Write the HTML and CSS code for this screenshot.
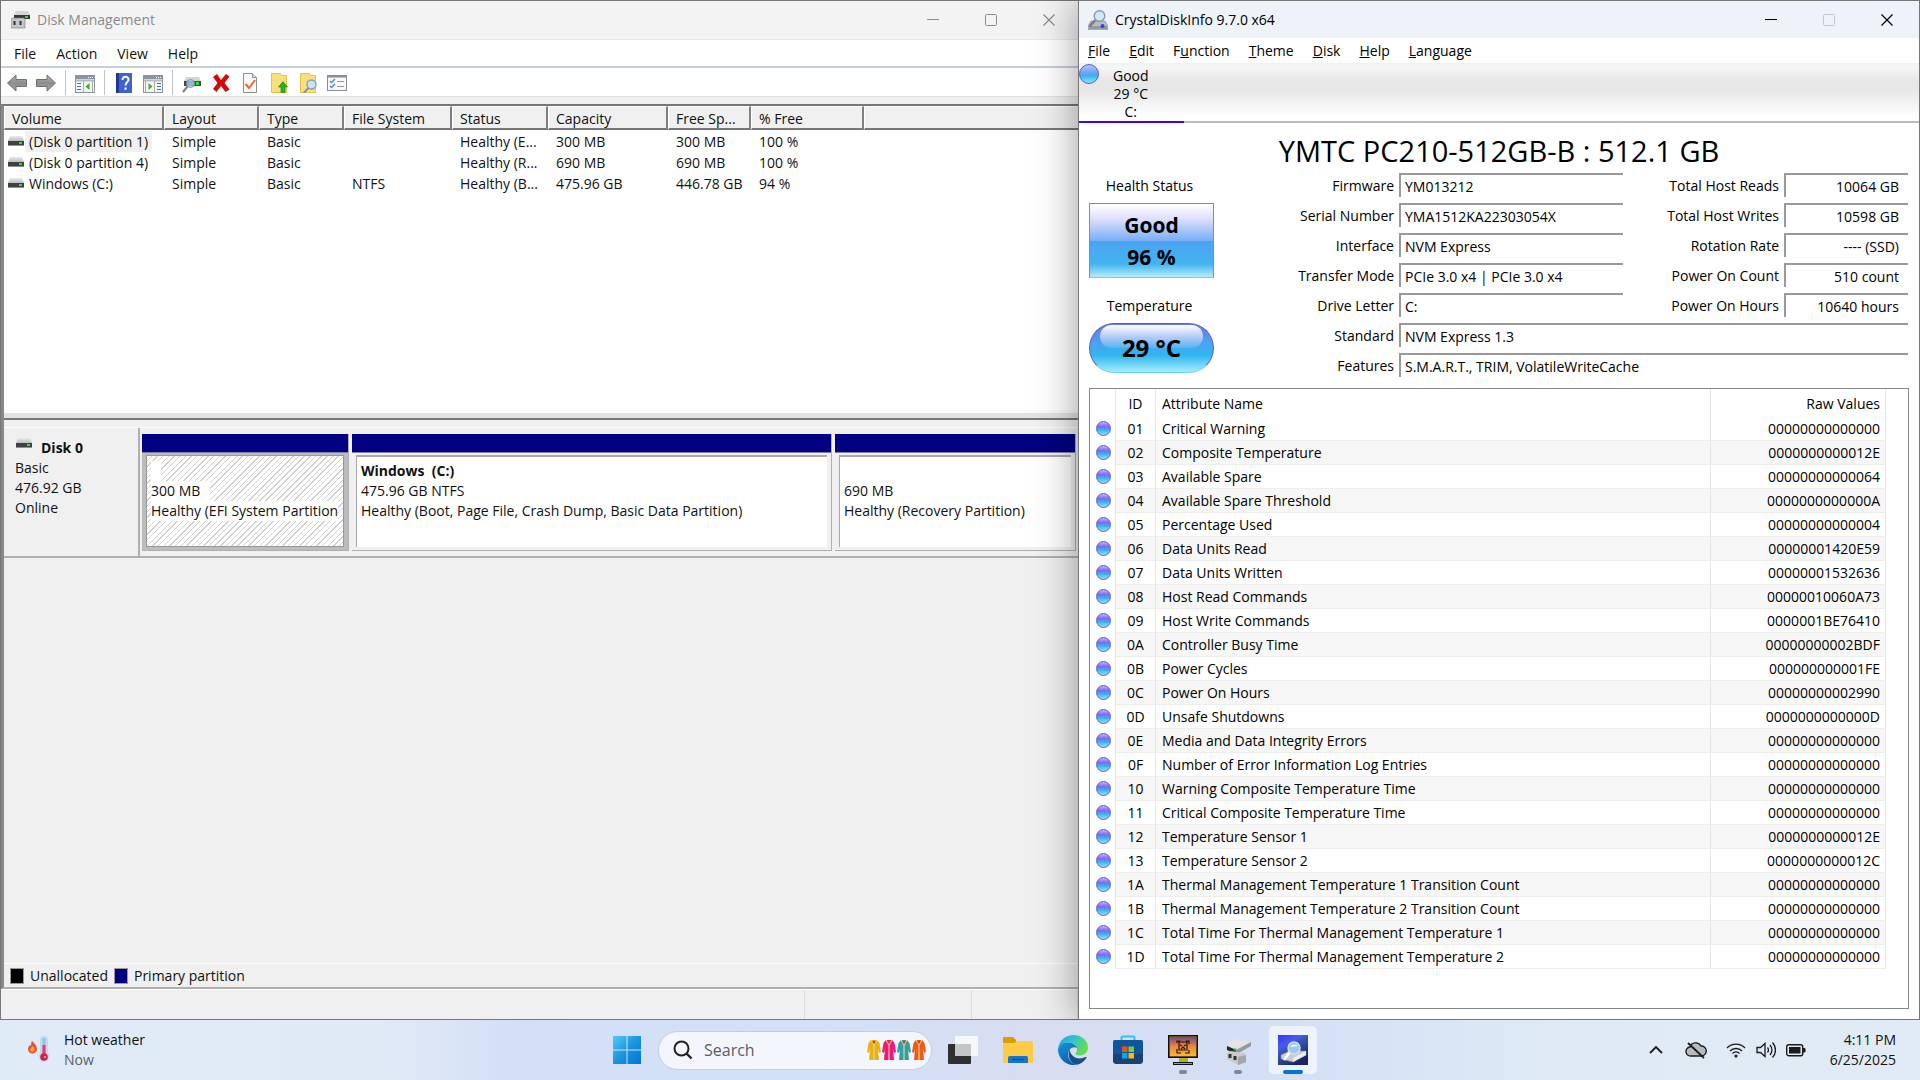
FILE: index.html
```html
<!DOCTYPE html>
<html lang="en">
  <head>
    <meta charset="UTF-8" />
    <meta name="viewport" content="width=device-width, initial-scale=1.0" />
    <title>Disk Management and CrystalDiskInfo</title>
    <link rel="stylesheet" href="styles.css">
  </head>
  <body>
    <!-- Shared symbols -->
    <svg class="defs" width="0" height="0" aria-hidden="true">
      <defs>
        <linearGradient id="driveTop" x1="0" y1="0" x2="0" y2="1">
          <stop offset="0" stop-color="#e9ebec" />
          <stop offset="1" stop-color="#b9bdc0" />
        </linearGradient>
        <linearGradient id="arrowFill" x1="0" y1="0" x2="0" y2="1">
          <stop offset="0" stop-color="#b5b5b5" />
          <stop offset="0.5" stop-color="#8d8d8d" />
          <stop offset="1" stop-color="#a5a5a5" />
        </linearGradient>
        <symbol id="drive" viewBox="0 0 18 12">
          <path d="M3 0h12l2 5H1z" fill="url(#driveTop)" />
          <rect x="1" y="5" width="16" height="4" fill="#3d4244" />
          <rect x="1" y="9" width="16" height="1" fill="#8b9194" />
          <rect x="12" y="6" width="3" height="2" fill="#2fe02f" />
        </symbol>
        <symbol id="minimize" viewBox="0 0 12 12">
          <path d="M0 5.5h12" stroke="currentColor" fill="none" />
        </symbol>
        <symbol id="maximize" viewBox="0 0 12 12">
          <rect x="0.5" y="0.5" width="11" height="11" rx="1" stroke="currentColor" fill="none" />
        </symbol>
        <symbol id="close" viewBox="0 0 12 12">
          <path d="M0.5 0.5l11 11M11.5 0.5l-11 11" stroke="currentColor" stroke-width="1.2" fill="none" />
        </symbol>
        <symbol id="panel" viewBox="0 0 20 18">
          <rect x="0.5" y="0.5" width="19" height="17" fill="#f4f4f4" stroke="#8c949c" />
          <rect x="1" y="1" width="18" height="3" fill="#8c949c" />
          <path d="M13 2.5h1M15 2.5h1M17 2.5h1" stroke="#fff" />
          <path d="M1 5.5h18" stroke="#b4bac0" stroke-width="2" />
        </symbol>
        <symbol id="robe" viewBox="0 0 14 22">
          <path d="M4 1h6l2.500 3 1.500 9-2 1-1-4 1 11H2l1-11-1 4-2-1 1.500-9z" fill="currentColor" />
          <path d="M4 1l3 5 3-5M7 6v15" stroke="#f4d277" stroke-width="1.2" fill="none" />
          <circle cx="7" cy="3" r="1.5" fill="#c9442a" />
        </symbol>
      </defs>
    </svg>

    <main class="desktop">
      <!-- Disk Management -->
      <section class="window disk-management">
        <header class="titlebar">
          <svg class="app-icon" viewBox="0 0 20 20">
            <path d="M5 1h12l2 4H3z" fill="#d3d5d6" />
            <rect x="3" y="5" width="16" height="4" fill="#35393b" />
            <rect x="14" y="6" width="3" height="2" fill="#2fe02f" />
            <path d="M0 9l2-1h11l1 1v9H0z" fill="#c4c6c9" stroke="#777" stroke-width="0.6" />
            <path d="M3.5 11v4M9.5 11v4" stroke="#333" stroke-width="2" />
          </svg>
          <span class="window-title">Disk Management</span>
          <button class="caption-button" aria-label="Minimize"><svg><use href="#minimize" /></svg></button>
          <button class="caption-button" aria-label="Maximize"><svg><use href="#maximize" /></svg></button>
          <button class="caption-button" aria-label="Close"><svg><use href="#close" /></svg></button>
        </header>

        <nav class="menubar">
          <button>File</button>
          <button>Action</button>
          <button>View</button>
          <button>Help</button>
        </nav>

        <div class="toolbar">
          <button aria-label="Back">
            <svg viewBox="0 0 20 20"><path d="M0.5 10L9 2v4.5h10.5v7H9V18z" fill="url(#arrowFill)" stroke="#6e6e6e" /></svg>
          </button>
          <button aria-label="Forward">
            <svg viewBox="0 0 20 20"><path d="M19.5 10L11 2v4.5H0.5v7H11V18z" fill="url(#arrowFill)" stroke="#6e6e6e" /></svg>
          </button>
          <span class="separator"></span>
          <button aria-label="Show console tree">
            <svg viewBox="0 0 20 20">
              <use href="#panel" y="2" width="20" height="18" />
              <path d="M2 10.5h4M2 13.5h4M2 16.5h4" stroke="#3b78b8" />
              <path d="M8.5 8v11M17.5 8v11" stroke="#aaa" />
              <path d="M14.5 10v7l-4-3.500z" fill="#3fae29" />
            </svg>
          </button>
          <span class="separator"></span>
          <button aria-label="Help">
            <svg viewBox="0 0 20 20">
              <rect x="2" y="0" width="16" height="20" fill="#3d63d2" />
              <rect x="2" y="0" width="3" height="20" fill="#20398f" />
              <path d="M8.5 7c0-4.500 6.500-4 6 0-0.300 2-3 2.500-3 5.500M11.5 14.5v2.200" stroke="#fff" stroke-width="2" fill="none" />
            </svg>
          </button>
          <button aria-label="Show action pane">
            <svg viewBox="0 0 20 20">
              <use href="#panel" y="2" width="20" height="18" />
              <path d="M14 10.5h4M14 13.5h4M14 16.5h4" stroke="#3b78b8" />
              <path d="M11.5 8v11M2.5 8v11" stroke="#aaa" />
              <path d="M5.5 10v7l4-3.500z" fill="#3fae29" />
            </svg>
          </button>
          <span class="separator"></span>
          <button aria-label="Rescan disks">
            <svg viewBox="0 0 20 20">
              <path d="M4 4h13l2 4H2z" fill="#d3d6d8" />
              <rect x="2" y="8" width="17" height="5" fill="#44494c" />
              <rect x="14" y="9" width="3" height="3" fill="#2fe02f" />
              <circle cx="8.5" cy="10.5" r="4" fill="#a9d2ee" fill-opacity="0.8" stroke="#7c99ad" />
              <path d="M5.5 13.5L1 19" stroke="#6d8294" stroke-width="2" />
            </svg>
          </button>
          <button aria-label="Delete">
            <svg viewBox="0 0 20 20"><path d="M2 4l4-3 4 6 5-6 3.500 2.500L13.500 10l5 6.500-4 2.500-4.500-6-4.500 6L2 16l4.500-6z" fill="#d4090c" /></svg>
          </button>
          <button aria-label="Properties">
            <svg viewBox="0 0 20 20">
              <path d="M3.5 0.5h9l4 4v15h-13z" fill="#f8f8f8" stroke="#8e8e8e" />
              <path d="M12.5 0.5v4h4" fill="#ddd" stroke="#8e8e8e" />
              <path d="M5.5 11l3.500 4 6-8" stroke="#f0662c" stroke-width="2" fill="none" />
            </svg>
          </button>
          <button aria-label="Attach VHD">
            <svg viewBox="0 0 20 20">
              <path d="M2.5 0.5h9l1 2h5v17h-15z" fill="#fadf7c" stroke="#e6bf4e" />
              <path d="M14 8.5l4.500 5.500H16v5.500h-4V14H9.500z" fill="#25b225" stroke="#158215" stroke-width="0.6" />
            </svg>
          </button>
          <button aria-label="Explore">
            <svg viewBox="0 0 20 20">
              <path d="M2.5 0.5h9l1 2h5v17h-15z" fill="#fadf7c" stroke="#e6bf4e" />
              <circle cx="13.5" cy="11.5" r="4.5" fill="#c9e4f5" stroke="#7ba3c0" stroke-width="1.4" />
              <path d="M10.5 15L6 19.5" stroke="#8a9099" stroke-width="2" />
            </svg>
          </button>
          <button aria-label="View list">
            <svg viewBox="0 0 20 20">
              <rect x="0.5" y="2.5" width="19" height="15" fill="#f8f8f8" stroke="#888e94" />
              <path d="M0 3.5h20" stroke="#888e94" stroke-width="2" />
              <path d="M3 8l1.500 1.500L8 6M3 13l1.500 1.500L8 11" stroke="#3d8fdb" stroke-width="1.4" fill="none" />
              <path d="M10 8.5h7M10 13.5h7" stroke="#999" />
            </svg>
          </button>
        </div>

        <div class="frame">
          <div class="volume-list">
            <table class="volumes">
              <colgroup>
                <col class="c-volume"><col class="c-layout"><col class="c-type"><col class="c-fs">
                <col class="c-status"><col class="c-capacity"><col class="c-space"><col class="c-free"><col>
              </colgroup>
              <thead>
                <tr>
                  <th>Volume</th><th>Layout</th><th>Type</th><th>File System</th><th>Status</th>
                  <th>Capacity</th><th>Free Sp...</th><th>% Free</th><th></th>
                </tr>
              </thead>
              <tbody>
                <tr>
                  <td><svg class="drive"><use href="#drive" /></svg><span class="selected">(Disk 0 partition 1)</span></td>
                  <td>Simple</td><td>Basic</td><td></td><td>Healthy (E...</td>
                  <td>300 MB</td><td>300 MB</td><td>100 %</td><td></td>
                </tr>
                <tr>
                  <td><svg class="drive"><use href="#drive" /></svg><span>(Disk 0 partition 4)</span></td>
                  <td>Simple</td><td>Basic</td><td></td><td>Healthy (R...</td>
                  <td>690 MB</td><td>690 MB</td><td>100 %</td><td></td>
                </tr>
                <tr>
                  <td><svg class="drive"><use href="#drive" /></svg><span>Windows (C:)</span></td>
                  <td>Simple</td><td>Basic</td><td>NTFS</td><td>Healthy (B...</td>
                  <td>475.96 GB</td><td>446.78 GB</td><td>94 %</td><td></td>
                </tr>
              </tbody>
            </table>
          </div>

          <div class="splitter"></div>

          <div class="graphical-view">
            <div class="disk-row">
              <div class="disk-label">
                <h2><svg class="drive"><use href="#drive" /></svg>Disk 0</h2>
                <p>Basic</p>
                <p>476.92 GB</p>
                <p>Online</p>
              </div>
              <div class="partitions">
                <div class="partition current">
                  <div class="partition-bar"></div>
                  <div class="partition-body">
                    <p><span class="blank"></span></p>
                    <p><span class="size">300 MB</span></p>
                    <p><span>Healthy (EFI System Partition</span></p>
                  </div>
                </div>
                <div class="partition">
                  <div class="partition-bar"></div>
                  <div class="partition-body">
                    <p><strong>Windows&nbsp; (C:)</strong></p>
                    <p>475.96 GB NTFS</p>
                    <p>Healthy (Boot, Page File, Crash Dump, Basic Data Partition)</p>
                  </div>
                </div>
                <div class="partition">
                  <div class="partition-bar"></div>
                  <div class="partition-body">
                    <p></p>
                    <p>690 MB</p>
                    <p>Healthy (Recovery Partition)</p>
                  </div>
                </div>
              </div>
            </div>
          </div>

          <div class="legend">
            <span class="swatch unallocated"></span><span>Unallocated</span>
            <span class="swatch primary"></span><span>Primary partition</span>
          </div>
        </div>

        <footer class="statusbar"><span></span><span></span><span></span></footer>
      </section>

      <!-- CrystalDiskInfo -->
      <section class="window crystal">
        <header class="titlebar">
          <svg class="app-icon" viewBox="0 0 20 20">
            <path d="M3 11h14l3 5v4H0v-4z" fill="#b9bcc2" stroke="#83868c" stroke-width="0.6" />
            <rect x="1" y="16" width="18" height="3" fill="#95989e" />
            <path d="M7.5 10L1.5 16.5" stroke="#777b82" stroke-width="2.5" />
            <circle cx="11.5" cy="6" r="5.3" fill="#cfe8fa" stroke="#8f9aa6" stroke-width="1.4" />
            <circle cx="14.5" cy="16" r="2" fill="#3a3af0" />
          </svg>
          <span class="window-title">CrystalDiskInfo 9.7.0 x64</span>
          <button class="caption-button" aria-label="Minimize"><svg><use href="#minimize" /></svg></button>
          <button class="caption-button" aria-label="Maximize" disabled><svg><use href="#maximize" /></svg></button>
          <button class="caption-button" aria-label="Close"><svg><use href="#close" /></svg></button>
        </header>

        <nav class="menubar">
          <button><u>F</u>ile</button>
          <button><u>E</u>dit</button>
          <button>F<u>u</u>nction</button>
          <button><u>T</u>heme</button>
          <button><u>D</u>isk</button>
          <button><u>H</u>elp</button>
          <button><u>L</u>anguage</button>
        </nav>

        <div class="drive-tabs">
          <button class="drive-tab">
            <span class="ball large"></span>
            <span>Good<br>29 °C<br>C:</span>
          </button>
        </div>

        <h1>YMTC PC210-512GB-B : 512.1 GB</h1>

        <div class="summary">
          <div class="status-column">
            <span class="caption">Health Status</span>
            <button class="health"><span>Good</span><span>96 %</span></button>
            <span class="caption">Temperature</span>
            <button class="temperature"><span>29 °C</span></button>
          </div>
          <div class="details">
            <label for="firmware">Firmware</label><input id="firmware" value="YM013212" readonly />
            <label for="reads">Total Host Reads</label><input id="reads" class="number" value="10064 GB" readonly />
            <label for="serial">Serial Number</label><input id="serial" value="YMA1512KA22303054X" readonly />
            <label for="writes">Total Host Writes</label><input id="writes" class="number" value="10598 GB" readonly />
            <label for="interface">Interface</label><input id="interface" value="NVM Express" readonly />
            <label for="rotation">Rotation Rate</label><input id="rotation" class="number" value="---- (SSD)" readonly />
            <label for="transfer">Transfer Mode</label><input id="transfer" value="PCIe 3.0 x4 | PCIe 3.0 x4" readonly />
            <label for="count">Power On Count</label><input id="count" class="number" value="510 count" readonly />
            <label for="letter">Drive Letter</label><input id="letter" value="C:" readonly />
            <label for="hours">Power On Hours</label><input id="hours" class="number" value="10640 hours" readonly />
            <label for="standard">Standard</label><input id="standard" class="wide" value="NVM Express 1.3" readonly />
            <label for="features">Features</label><input id="features" class="wide" value="S.M.A.R.T., TRIM, VolatileWriteCache" readonly />
          </div>
        </div>

        <div class="smart-list">
          <table class="smart">
            <colgroup><col class="c-ball"><col class="c-id"><col><col class="c-raw"></colgroup>
            <thead>
              <tr><th></th><th>ID</th><th>Attribute Name</th><th>Raw Values</th></tr>
            </thead>
            <tbody>
              <tr><td><span class="ball"></span></td><td>01</td><td>Critical Warning</td><td>00000000000000</td></tr>
              <tr><td><span class="ball"></span></td><td>02</td><td>Composite Temperature</td><td>0000000000012E</td></tr>
              <tr><td><span class="ball"></span></td><td>03</td><td>Available Spare</td><td>00000000000064</td></tr>
              <tr><td><span class="ball"></span></td><td>04</td><td>Available Spare Threshold</td><td>0000000000000A</td></tr>
              <tr><td><span class="ball"></span></td><td>05</td><td>Percentage Used</td><td>00000000000004</td></tr>
              <tr><td><span class="ball"></span></td><td>06</td><td>Data Units Read</td><td>00000001420E59</td></tr>
              <tr><td><span class="ball"></span></td><td>07</td><td>Data Units Written</td><td>00000001532636</td></tr>
              <tr><td><span class="ball"></span></td><td>08</td><td>Host Read Commands</td><td>00000010060A73</td></tr>
              <tr><td><span class="ball"></span></td><td>09</td><td>Host Write Commands</td><td>0000001BE76410</td></tr>
              <tr><td><span class="ball"></span></td><td>0A</td><td>Controller Busy Time</td><td>00000000002BDF</td></tr>
              <tr><td><span class="ball"></span></td><td>0B</td><td>Power Cycles</td><td>000000000001FE</td></tr>
              <tr><td><span class="ball"></span></td><td>0C</td><td>Power On Hours</td><td>00000000002990</td></tr>
              <tr><td><span class="ball"></span></td><td>0D</td><td>Unsafe Shutdowns</td><td>0000000000000D</td></tr>
              <tr><td><span class="ball"></span></td><td>0E</td><td>Media and Data Integrity Errors</td><td>00000000000000</td></tr>
              <tr><td><span class="ball"></span></td><td>0F</td><td>Number of Error Information Log Entries</td><td>00000000000000</td></tr>
              <tr><td><span class="ball"></span></td><td>10</td><td>Warning Composite Temperature Time</td><td>00000000000000</td></tr>
              <tr><td><span class="ball"></span></td><td>11</td><td>Critical Composite Temperature Time</td><td>00000000000000</td></tr>
              <tr><td><span class="ball"></span></td><td>12</td><td>Temperature Sensor 1</td><td>0000000000012E</td></tr>
              <tr><td><span class="ball"></span></td><td>13</td><td>Temperature Sensor 2</td><td>0000000000012C</td></tr>
              <tr><td><span class="ball"></span></td><td>1A</td><td>Thermal Management Temperature 1 Transition Count</td><td>00000000000000</td></tr>
              <tr><td><span class="ball"></span></td><td>1B</td><td>Thermal Management Temperature 2 Transition Count</td><td>00000000000000</td></tr>
              <tr><td><span class="ball"></span></td><td>1C</td><td>Total Time For Thermal Management Temperature 1</td><td>00000000000000</td></tr>
              <tr><td><span class="ball"></span></td><td>1D</td><td>Total Time For Thermal Management Temperature 2</td><td>00000000000000</td></tr>
            </tbody>
          </table>
        </div>
      </section>
    </main>

    <!-- Taskbar -->
    <footer class="taskbar">
      <button class="weather">
        <svg width="24" height="30" viewBox="0 0 24 30">
          <path d="M6 6c3 3 5 5 5 8a4.500 4.500 0 0 1-9 0c0-2 1-3 2-4l1 1c0-2 0-3 1-5z" fill="#e2553a" />
          <path d="M6.5 11c2 2 2.500 3 2 4a2.300 2.300 0 0 1-4.500 0c0-1.500 1.500-2 2.500-4z" fill="#f9a13c" />
          <path d="M14 5a4 4 0 0 1 8 0v12.500a5.500 5.500 0 1 1-8 0z" fill="#b9dcf8" />
          <path d="M18 3v18" stroke="#a2bfd8" stroke-width="3" />
          <path d="M18 10v12" stroke="#ee3a5f" stroke-width="3" />
          <circle cx="18" cy="22" r="3.8" fill="#d3214a" />
          <circle cx="19" cy="22" r="1" fill="#fbb" />
        </svg>
        <span>Hot weather<br><small>Now</small></span>
      </button>

      <div class="apps">
        <button aria-label="Start">
          <svg width="30" height="30" viewBox="0 0 30 30">
            <defs>
              <linearGradient id="winFill" x1="0" y1="0" x2="30" y2="30" gradientUnits="userSpaceOnUse">
                <stop offset="0" stop-color="#55d0fb" />
                <stop offset="0.5" stop-color="#1a95e0" />
                <stop offset="1" stop-color="#0370d0" />
              </linearGradient>
            </defs>
            <path d="M1 1h13.500v13.500H1zM15.500 1H29v13.500H15.500zM1 15.500h13.500V29H1zM15.500 15.500H29V29H15.500z" fill="url(#winFill)" />
          </svg>
        </button>
        <label class="search">
          <svg width="20" height="20" viewBox="0 0 20 20"><circle cx="8.5" cy="8.5" r="7" fill="none" stroke="#222" stroke-width="2" /><path d="M13.5 13.5l5 5" stroke="#222" stroke-width="2.4" /></svg>
          <input type="text" placeholder="Search" aria-label="Search" />
          <span class="robes">
            <svg class="yellow"><use href="#robe" /></svg>
            <svg class="pink"><use href="#robe" /></svg>
            <svg class="teal"><use href="#robe" /></svg>
            <svg class="orange"><use href="#robe" /></svg>
          </span>
        </label>
        <button aria-label="Task view">
          <svg width="32" height="32" viewBox="0 0 32 32">
            <rect x="1" y="10" width="23" height="20" rx="1" fill="#2f2f2f" />
            <rect x="8" y="2" width="23" height="20" rx="1" fill="#f6f7f9" />
            <path d="M8 10h16v12H8z" fill="#c3c5c8" />
          </svg>
        </button>
        <button aria-label="File Explorer">
          <svg width="32" height="32" viewBox="0 0 32 32">
            <path d="M1 4a1 1 0 0 1 1-1h9l3 3v8H1z" fill="#dd9a0a" />
            <path d="M1 9h11l3-2h15a1 1 0 0 1 1 1v20a1 1 0 0 1-1 1H1z" fill="#fdcb46" />
            <path d="M6 29v-5a2 2 0 0 1 2-2h16a2 2 0 0 1 2 2v5z" fill="#1177cf" />
            <path d="M10 25.5h12" stroke="#0a4f95" stroke-width="1.4" />
          </svg>
        </button>
        <button aria-label="Edge">
          <svg width="32" height="32" viewBox="0 0 32 32">
            <defs>
              <linearGradient id="edgeTop" x1="0" y1="0" x2="1" y2="0.5">
                <stop offset="0" stop-color="#1f9fe0" />
                <stop offset="0.5" stop-color="#33c3cf" />
                <stop offset="1" stop-color="#67dd4a" />
              </linearGradient>
              <linearGradient id="edgeLow" x1="0" y1="0" x2="0.6" y2="1">
                <stop offset="0" stop-color="#1794dd" />
                <stop offset="1" stop-color="#0c5cae" />
              </linearGradient>
            </defs>
            <path d="M1 15C2 6 9 1 16.500 1 25 1 31 7 31 13.500c0 5-4 8-8 8-3 0-4.500-1-4.500-2 0-.8 1.500-1.500 1.500-4C20 11 16 8.500 11.500 8.500 6 8.500 2 11.500 1 15z" fill="url(#edgeTop)" />
            <path d="M1 16c0-4 4.500-7.500 10-7.500 4 0 8 2 9 5.500-4-2.500-9 1-9 6.500 0 5 4 9.500 8 10.300A15.500 15.500 0 0 1 1 16z" fill="url(#edgeLow)" />
            <path d="M12.500 15.500C9.500 22 14 30.500 19.500 30.800c4-.5 8-3.500 10-7 .3-.7-.3-1-1-.7-6 3-14.500 1-16-7.600z" fill="#14508f" />
          </svg>
        </button>
        <button aria-label="Microsoft Store">
          <svg width="32" height="32" viewBox="0 0 32 32">
            <path d="M9.500 8V3.500a1 1 0 0 1 1-1h11a1 1 0 0 1 1 1V8" fill="none" stroke="#36bdf5" stroke-width="2" />
            <path d="M1 7.500Q1 6 2.500 6h27Q31 6 31 7.500V26a4 4 0 0 1-4 4H5a4 4 0 0 1-4-4z" fill="#11569b" />
            <path d="M1 20h30v6a4 4 0 0 1-4 4H5a4 4 0 0 1-4-4z" fill="#1b4275" />
            <path d="M10 12.500h5.500V18H10z" fill="#f1511b" />
            <path d="M16.500 12.500H22V18h-5.500z" fill="#80cc28" />
            <path d="M10 19h5.500v5.500H10z" fill="#00adef" />
            <path d="M16.500 19H22v5.500h-5.500z" fill="#fbbc09" />
          </svg>
        </button>
        <button class="running" aria-label="Crash viewer">
          <svg width="32" height="32" viewBox="0 0 32 32">
            <defs>
              <linearGradient id="sunset" x1="0" y1="0" x2="0" y2="1">
                <stop offset="0" stop-color="#76477c" />
                <stop offset="0.5" stop-color="#e58a45" />
                <stop offset="1" stop-color="#fdb52b" />
              </linearGradient>
            </defs>
            <rect x="1" y="1" width="30" height="23" fill="#111" />
            <rect x="2.5" y="2.5" width="27" height="20" fill="#b98a35" />
            <rect x="3" y="3" width="26" height="19" fill="url(#sunset)" />
            <path d="M10 9V7h3M19 7h3v3M10 15v4h4M18 19h4v-3M12 8h8v8h-8zM13 11l2 1M19 11l-2 1M14 15l2-2 2 2" fill="none" stroke="#2a1208" stroke-width="1.2" />
            <rect x="12" y="24" width="9" height="4" fill="#a6b52b" />
            <rect x="6" y="28" width="20" height="3" fill="#111" />
            <rect x="7" y="29" width="18" height="1" fill="#59d32c" />
          </svg>
        </button>
        <button class="running" aria-label="Disk Management">
          <svg width="32" height="32" viewBox="0 0 32 32">
            <path d="M5 12L11 5l18 3-6 7z" fill="#e3e4e5" />
            <path d="M5 12l9 4 15-8v4l-14 8-10-5z" fill="#96989b" />
            <path d="M5 12l9 4v4l-9-4z" fill="#26292b" />
            <path d="M12 15l2 1" stroke="#25c52c" stroke-width="2" />
            <path d="M5 19l4-2 13 2 2 3v6l-8 3-11-6z" fill="#c9cacc" />
            <path d="M16 23l8-2v7l-8 3z" fill="#a4a6a9" />
            <path d="M8 20v4M13 22v4" stroke="#333" stroke-width="3" />
          </svg>
        </button>
        <button class="running active" aria-label="CrystalDiskInfo">
          <svg width="32" height="32" viewBox="0 0 32 32">
            <defs>
              <linearGradient id="crystalFill" x1="0" y1="0" x2="0.6" y2="1">
                <stop offset="0" stop-color="#3434f5" />
                <stop offset="0.35" stop-color="#4a5cf0" />
                <stop offset="0.45" stop-color="#3658b8" />
                <stop offset="1" stop-color="#1c2367" />
              </linearGradient>
            </defs>
            <rect x="1" y="1" width="30" height="30" fill="url(#crystalFill)" />
            <path d="M4 21l8-4h17v4l-13 7-12-3z" fill="#c9ccd1" stroke="#83868f" stroke-width="0.6" />
            <path d="M16 24l13-7v4l-13 7z" fill="#eceef0" />
            <path d="M13 18l-6 8" stroke="#fff" stroke-width="2.5" />
            <circle cx="17" cy="14" r="6" fill="#9cc9ec" stroke="#d7dde4" stroke-width="1.5" />
            <path d="M13 13a5 4 0 0 1 8-1z" fill="#e8f7fe" />
          </svg>
        </button>
      </div>

      <div class="tray">
        <button aria-label="Show hidden icons">
          <svg width="20" height="20" viewBox="0 0 20 20"><path d="M4 13l6-6 6 6" fill="none" stroke="#1b1b1b" stroke-width="1.8" /></svg>
        </button>
        <button class="cloud" aria-label="OneDrive">
          <svg width="22" height="20" viewBox="0 0 22 20">
            <path d="M6 16a4.500 4.500 0 0 1-1-9 6 6 0 0 1 11-1 5 5 0 0 1 .5 10z" fill="#b8bbbe" stroke="#1b1b1b" stroke-width="1.4" />
            <path d="M3 3l16 15" stroke="#1b1b1b" stroke-width="1.8" />
          </svg>
        </button>
        <button class="system" aria-label="Network, volume, battery">
          <svg width="20" height="20" viewBox="0 0 20 20">
            <g fill="none" stroke="#1b1b1b" stroke-width="1.4"><path d="M1 8a12.500 12.500 0 0 1 18 0M4 11a8.500 8.500 0 0 1 12 0M6.500 13.500a5 5 0 0 1 7 0" /></g>
            <circle cx="10" cy="16" r="1.6" fill="#1b1b1b" />
          </svg>
          <svg width="20" height="20" viewBox="0 0 20 20">
            <path d="M1 7.500h3.500L9 3.500v13L4.500 12.500H1zM11.500 7.500a4 4 0 0 1 0 5M14 5a7.500 7.500 0 0 1 0 10M16.500 2.500a11 11 0 0 1 0 15" fill="none" stroke="#1b1b1b" stroke-width="1.3" />
          </svg>
          <svg width="20" height="20" viewBox="0 0 20 20">
            <rect x="0.7" y="4.7" width="16" height="11" rx="2" fill="none" stroke="#1b1b1b" stroke-width="1.4" />
            <rect x="3" y="7" width="11.5" height="6.5" fill="#1b1b1b" />
            <path d="M17 8h1.500a1 1 0 0 1 1 1v2.500a1 1 0 0 1-1 1H17z" fill="#1b1b1b" />
          </svg>
        </button>
        <button class="clock">4:11 PM<br>6/25/2025</button>
      </div>
    </footer>
  </body>
</html>
```

FILE: styles.css
```css
* {
  box-sizing: border-box;
}
body {
  margin: 0;
  height: 100vh;
  display: flex;
  flex-direction: column;
  overflow: hidden;
  font-family: "Open Sans", "Noto Sans", sans-serif;
  font-size: 14px;
  line-height: 20px;
  color: #111;
}
button,
input {
  font: inherit;
  color: inherit;
  border: none;
  background: none;
  padding: 0;
}
svg {
  display: block;
}
p,
h1,
h2 {
  margin: 0;
}
table {
  border-collapse: separate;
  border-spacing: 0;
  table-layout: fixed;
}
th {
  font-weight: normal;
  text-align: left;
}
.defs {
  position: absolute;
}

/* Windows */
.desktop {
  flex: 1;
  min-height: 0;
  display: grid;
  grid-template-columns: 1078fr 842fr;
}
.window {
  min-width: 0;
  min-height: 0;
  display: flex;
  flex-direction: column;
  border: 1px solid #777;
}
.titlebar {
  display: flex;
  align-items: center;
  height: 39px;
  flex: none;
}
.app-icon {
  width: 20px;
  height: 20px;
}
.window-title {
  margin-left: 6px;
  flex: 1;
}
.caption-button {
  width: 58px;
  height: 100%;
  display: flex;
  align-items: center;
  justify-content: center;
}
.caption-button svg {
  width: 12px;
  height: 12px;
}
.caption-button:disabled {
  color: #c3c6ca;
}
.menubar {
  display: flex;
  flex: none;
}

/* Disk Management */
.disk-management {
  background: #f0f0f0;
  border-right: none;
}
.disk-management .titlebar {
  padding-left: 10px;
  background: #f3f3f3;
  color: #8a8a8a;
  border-bottom: 1px solid #e8e8e8;
}
.disk-management .menubar {
  height: 28px;
  padding: 2px 0 0 13px;
  gap: 20px;
  background: #fff;
  border-bottom: 2px solid #c6ced6;
}
.toolbar {
  display: flex;
  align-items: center;
  gap: 9px;
  flex: none;
  height: 29px;
  padding: 1px 0 0 6px;
  background: #fff;
  border-bottom: 1px solid #e0e0e0;
}
.toolbar svg {
  width: 20px;
  height: 20px;
}
.separator {
  width: 1px;
  height: 25px;
  background: #c3c3c3;
}
.frame {
  flex: 1;
  min-height: 0;
  margin-top: 7px;
  display: flex;
  flex-direction: column;
  border-top: 2px solid #777;
  border-left: 3px solid #888;
  border-bottom: 2px solid #b0b0b0;
}
.volume-list {
  flex: 307;
  min-height: 0;
  background: #fff;
}
.volumes {
  width: 100%;
}
.c-volume {
  width: 160px;
}
.c-layout {
  width: 95px;
}
.c-type {
  width: 85px;
}
.c-fs {
  width: 108px;
}
.c-status {
  width: 96px;
}
.c-capacity {
  width: 120px;
}
.c-space {
  width: 83px;
}
.c-free {
  width: 113px;
}
.volumes th {
  height: 24px;
  padding: 3px 0 0 7px;
  line-height: 18px;
  background: #f0f0f0;
  border-top: 1px solid #fff;
  border-left: 1px solid #fff;
  border-right: 2px solid #808080;
  border-bottom: 2px solid #777;
}
.volumes th:last-child {
  border-right: none;
}
.volumes td {
  height: 21px;
  padding: 0 0 0 8px;
  line-height: 21px;
  white-space: nowrap;
}
.volumes tr:first-child td {
  padding-top: 1px;
}
.volumes td:first-child {
  display: flex;
  align-items: center;
  padding-left: 3px;
}
.volumes tr:first-child td:first-child {
  height: 22px;
}
.drive {
  width: 18px;
  height: 12px;
}
.volumes td span {
  padding: 0 4px;
}
.volumes .selected {
  background: #f0f0f0;
}
.splitter {
  flex: none;
  height: 10px;
  border-top: 3px solid #fafafa;
  border-bottom: 2px solid #777;
  background: #e3e3e3;
}
.graphical-view {
  flex: 540;
  min-height: 0;
  padding-top: 7px;
}
.disk-row {
  display: flex;
  height: 131px;
  border-top: 1px solid #fff;
  border-bottom: 2px solid #b0b0b0;
}
.disk-label {
  width: 136px;
  padding: 10px 0 0 11px;
  border-right: 2px solid #b0b0b0;
}
.disk-label h2 {
  display: flex;
  gap: 8px;
  font-size: 14px;
  font-weight: bold;
  line-height: 20px;
}
.partitions {
  flex: 1;
  min-width: 0;
  display: grid;
  grid-template-columns: 207fr 480fr 241fr;
  gap: 3px;
  padding: 6px 2px 5px;
}
.partition {
  min-width: 0;
  display: flex;
  flex-direction: column;
  border-right: 1px solid #b0b0b0;
  border-bottom: 1px solid #b0b0b0;
}
.partition-bar {
  height: 19px;
  background: #000080;
  border-bottom: 1px solid #8080b0;
}
.partition-body {
  flex: 1;
  margin: 2px 4px 3px;
  padding: 4px 0 0 4px;
  overflow: hidden;
  white-space: nowrap;
  background: #fff;
  border-top: 2px solid #a8a8a8;
  border-left: 1px solid #a8a8a8;
}
.partition-body p {
  height: 20px;
}
.partition.current {
  background: #bcbcbc;
}
.current .partition-body {
  border: 1px solid #999;
  padding-top: 5px;
  background: repeating-linear-gradient(135deg, #fff 0 3px, #d0d0d0 3px 4px);
}
.current span {
  display: inline-block;
  height: 20px;
  background: #fff;
}
.current .blank {
  width: 10px;
}
.current .size {
  padding-right: 10px;
}
.legend {
  display: flex;
  align-items: center;
  gap: 6px;
  flex: none;
  height: 24px;
  padding-left: 6px;
  border-top: 1px solid #fff;
}
.swatch {
  width: 14px;
  height: 16px;
  border: 1px solid #999;
}
.unallocated {
  background: #000;
}
.primary {
  background: #000080;
}
.statusbar {
  display: grid;
  grid-template-columns: 805fr 167fr 106fr;
  flex: none;
  height: 30px;
  border-top: 1px solid #fff;
}
.statusbar span {
  border-right: 1px solid #dcdcdc;
}

/* CrystalDiskInfo */
.crystal {
  position: relative;
  background: #fff;
  color: #000;
  box-shadow: 0 0 40px rgba(0, 0, 0, 0.4);
}
.crystal .titlebar {
  height: 37px;
  padding: 0 3px 0 9px;
  background: #eef3fa;
}
.crystal .window-title {
  margin-left: 7px;
}
.crystal .menubar {
  height: 25px;
  padding-left: 9px;
  gap: 19px;
}
.drive-tabs {
  flex: none;
  height: 60px;
  background: linear-gradient(#f0f0f0 0, #f7f7f7 4px, #e6e6e6 18px, #e8e8e8 28px, #fff 54px);
  border-bottom: 2px solid #bbb;
}
.drive-tab {
  display: flex;
  width: 105px;
  height: 60px;
  padding-top: 4px;
  line-height: 18px;
  border-bottom: 2px solid #4000ff;
}
.drive-tab span:last-child {
  margin-left: 14px;
}
.ball {
  display: block;
  width: 15px;
  height: 15px;
  border-radius: 50%;
  border: 1px solid #5a5fc8;
  background: linear-gradient(#c4b4f4 0, #7a6cf0 35%, #38b0f0 60%, #8fe4fc 100%);
}
.ball.large {
  width: 20px;
  height: 20px;
  margin-top: -3px;
  background: linear-gradient(#b9bffa 0, #68a4f0 45%, #34b4ee 60%, #8fe4fc 100%);
}
.crystal h1 {
  flex: none;
  height: 50px;
  font-size: 29px;
  font-weight: normal;
  line-height: 56px;
  text-align: center;
}
.summary {
  display: flex;
  flex: none;
  padding: 0 11px 0 10px;
}
.status-column {
  width: 125px;
  display: flex;
  flex-direction: column;
}
.caption {
  height: 24px;
  margin-bottom: 6px;
  padding-right: 4px;
  line-height: 26px;
  text-align: center;
}
.health {
  display: flex;
  flex-direction: column;
  align-items: center;
  justify-content: center;
  height: 75px;
  margin-bottom: 15px;
  font-size: 21px;
  font-weight: bold;
  line-height: 32px;
  border: 1px solid #7f86cf;
  border-bottom-color: #6fd0f6;
  background: linear-gradient(#fff 0, #dfe0fc 20%, #7aaef6 50%, #4ba3f0 51%, #42b4f0 82%, #b5ecfb 100%);
}
.temperature {
  position: relative;
  height: 50px;
  font-size: 24px;
  font-weight: bold;
  border: 1px solid #5a64b4;
  border-bottom-color: #6fd0f6;
  border-radius: 25px;
  background: linear-gradient(#6f74f2 0, #4ba3f0 40%, #30b6ee 65%, #a5ecfc 100%);
}
.temperature::before {
  content: "";
  position: absolute;
  top: 1px;
  left: 10px;
  right: 10px;
  height: 23px;
  border-radius: 12px;
  background: linear-gradient(#fff, rgba(255, 255, 255, 0.1));
}
.temperature span {
  position: relative;
}
.details {
  flex: 1;
  display: grid;
  grid-template-columns: 180fr 224fr 151fr 124fr;
  gap: 6px 5px;
}
.details label {
  line-height: 26px;
  height: 24px;
  text-align: right;
}
.details input {
  width: 100%;
  min-width: 0;
  height: 24px;
  padding: 0 0 0 4px;
  border-top: 2px solid #999;
  border-left: 2px solid #999;
}
.details .number {
  padding-right: 9px;
  text-align: right;
}
.details .wide {
  grid-column: span 3;
}
.smart-list {
  flex: 1;
  min-height: 0;
  margin: 11px 10px 10px;
  padding-right: 22px;
  border: 1px solid #828790;
}
.smart {
  width: 100%;
}
.c-ball {
  width: 26px;
}
.c-id {
  width: 40px;
}
.c-raw {
  width: 175px;
}
.smart th {
  height: 28px;
  padding: 2px 5px 0 6px;
  border-right: 1px solid #e5e5e5;
}
.smart td {
  height: 24px;
  padding: 0 5px 0 6px;
  line-height: 23px;
  border-right: 1px solid #e5e5e5;
  border-bottom: 1px solid #eee;
}
.smart td:first-child {
  padding: 0 0 0 6px;
  border-bottom: none;
}
.smart tr:nth-child(even) td:not(:first-child) {
  background: #f7f7f7;
}
.smart td .ball {
  margin-bottom: 2px;
}
.smart th:nth-child(2),
.smart td:nth-child(2) {
  padding-left: 0;
  padding-right: 0;
  text-align: center;
}
.smart th:last-child,
.smart td:last-child {
  text-align: right;
}

/* Taskbar */
.taskbar {
  position: relative;
  display: grid;
  grid-template-columns: 1fr auto 1fr;
  align-items: center;
  flex: none;
  height: 60px;
  background: linear-gradient(90deg, #dfebf6 0, #e0eaf6 20%, #d3dff6 27%, #d2e1f6 42%, #d8dcf0 55%, #d3e0f5 66%, #dfeaf5 82%, #e0ebf6 100%);
}
.weather {
  display: flex;
  align-items: center;
  gap: 14px;
  padding-left: 26px;
  text-align: left;
}
.weather small {
  font-size: 14px;
  color: #5a6068;
}
.apps {
  display: flex;
  align-items: center;
  gap: 7px;
}
.apps button {
  display: flex;
  align-items: center;
  justify-content: center;
  width: 48px;
  height: 48px;
  border-radius: 5px;
}
.search {
  display: flex;
  align-items: center;
  width: 274px;
  height: 39px;
  padding: 0 5px 0 14px;
  border-radius: 20px;
  background: #f3f6fd;
  border: 1px solid #c5cde0;
}
.search input {
  flex: 1;
  min-width: 0;
  margin-left: 11px;
  font-size: 16px;
}
.search input::placeholder {
  color: #5a5d63;
  opacity: 1;
}
.robes {
  display: flex;
  gap: 1px;
}
.robes svg {
  width: 14px;
  height: 22px;
}
.yellow {
  color: #e8b414;
}
.pink {
  color: #f3147f;
}
.teal {
  color: #2fa0ac;
}
.orange {
  color: #ee5a1c;
}
.running {
  position: relative;
}
.running::after {
  content: "";
  position: absolute;
  bottom: 0;
  width: 8px;
  height: 4px;
  border-radius: 2px;
  background: #808692;
}
.running.active {
  background: #eef2fb;
}
.running.active::after {
  width: 20px;
  background: #0078d4;
}
.tray {
  display: flex;
  align-items: center;
  justify-content: flex-end;
  gap: 19px;
  padding-right: 24px;
}
.system {
  display: flex;
  gap: 10px;
}
.clock {
  width: 71px;
  text-align: right;
}
```
